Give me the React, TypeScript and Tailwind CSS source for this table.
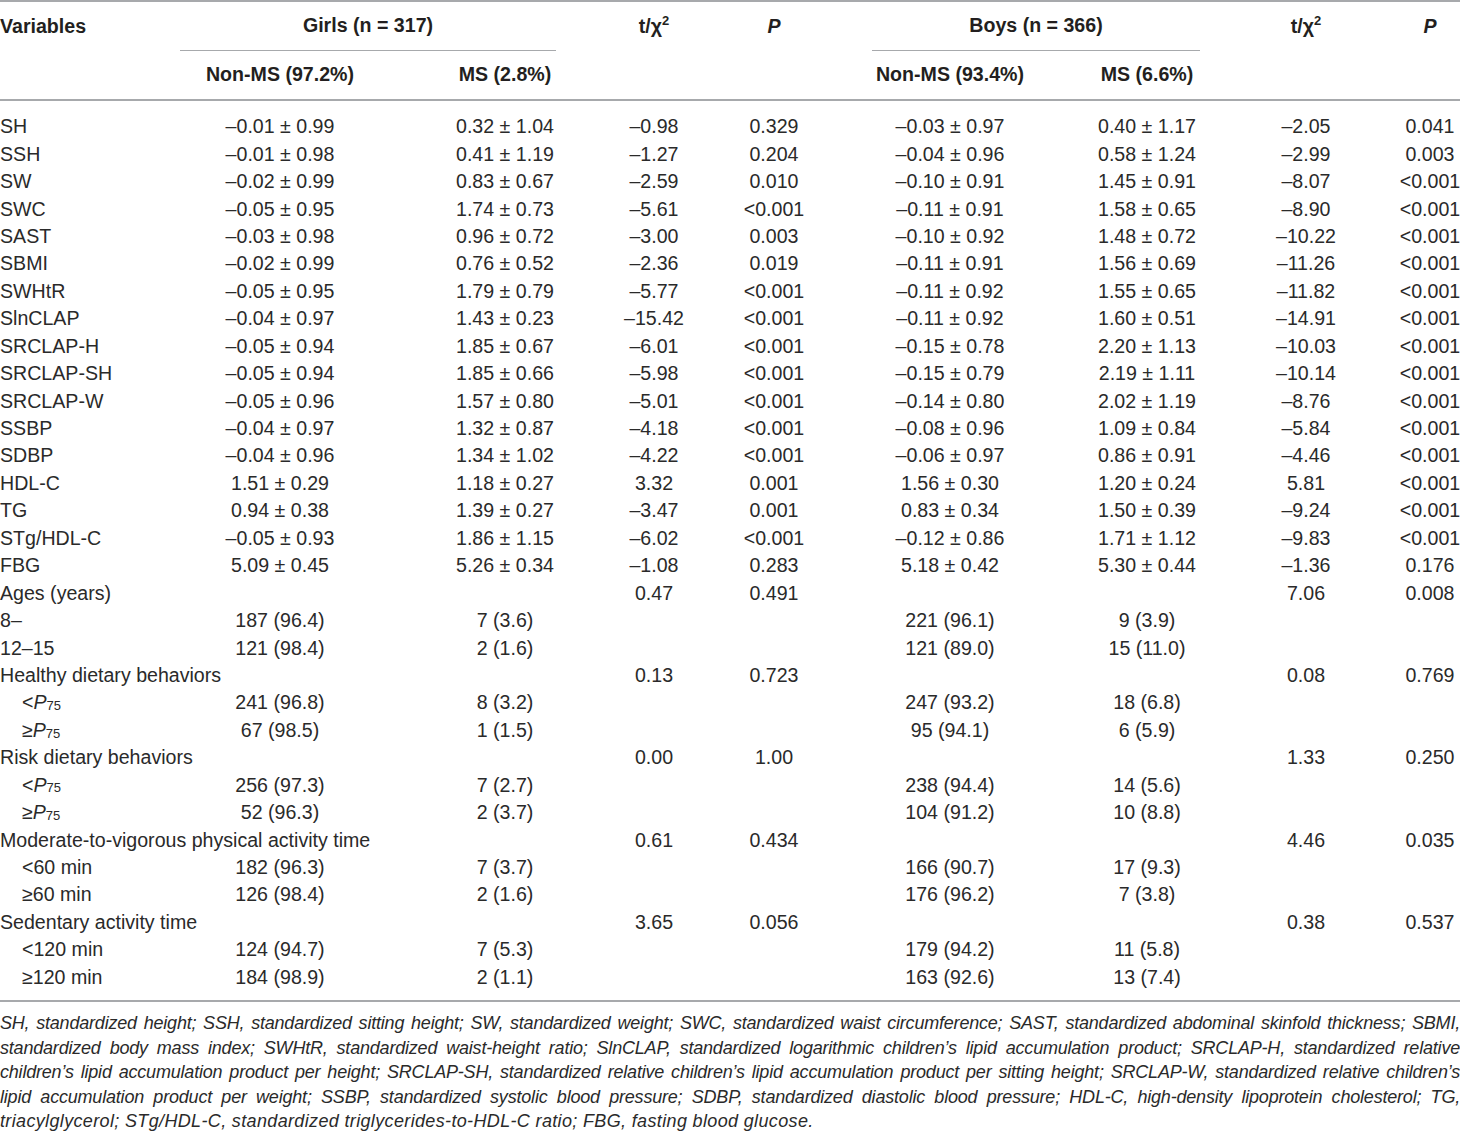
import React from 'react';

type Row = { label: React.ReactNode; indent?: boolean; cells: string[] };

const P75 = ({ sign }: { sign: string }) => (
  <>
    {sign}
    <span className="italic">P</span>
    <sub className="text-[13px]">75</sub>
  </>
);

const continuous: [string, ...string[]][] = [
  ['SH', '–0.01 ± 0.99', '0.32 ± 1.04', '–0.98', '0.329', '–0.03 ± 0.97', '0.40 ± 1.17', '–2.05', '0.041'],
  ['SSH', '–0.01 ± 0.98', '0.41 ± 1.19', '–1.27', '0.204', '–0.04 ± 0.96', '0.58 ± 1.24', '–2.99', '0.003'],
  ['SW', '–0.02 ± 0.99', '0.83 ± 0.67', '–2.59', '0.010', '–0.10 ± 0.91', '1.45 ± 0.91', '–8.07', '<0.001'],
  ['SWC', '–0.05 ± 0.95', '1.74 ± 0.73', '–5.61', '<0.001', '–0.11 ± 0.91', '1.58 ± 0.65', '–8.90', '<0.001'],
  ['SAST', '–0.03 ± 0.98', '0.96 ± 0.72', '–3.00', '0.003', '–0.10 ± 0.92', '1.48 ± 0.72', '–10.22', '<0.001'],
  ['SBMI', '–0.02 ± 0.99', '0.76 ± 0.52', '–2.36', '0.019', '–0.11 ± 0.91', '1.56 ± 0.69', '–11.26', '<0.001'],
  ['SWHtR', '–0.05 ± 0.95', '1.79 ± 0.79', '–5.77', '<0.001', '–0.11 ± 0.92', '1.55 ± 0.65', '–11.82', '<0.001'],
  ['SlnCLAP', '–0.04 ± 0.97', '1.43 ± 0.23', '–15.42', '<0.001', '–0.11 ± 0.92', '1.60 ± 0.51', '–14.91', '<0.001'],
  ['SRCLAP-H', '–0.05 ± 0.94', '1.85 ± 0.67', '–6.01', '<0.001', '–0.15 ± 0.78', '2.20 ± 1.13', '–10.03', '<0.001'],
  ['SRCLAP-SH', '–0.05 ± 0.94', '1.85 ± 0.66', '–5.98', '<0.001', '–0.15 ± 0.79', '2.19 ± 1.11', '–10.14', '<0.001'],
  ['SRCLAP-W', '–0.05 ± 0.96', '1.57 ± 0.80', '–5.01', '<0.001', '–0.14 ± 0.80', '2.02 ± 1.19', '–8.76', '<0.001'],
  ['SSBP', '–0.04 ± 0.97', '1.32 ± 0.87', '–4.18', '<0.001', '–0.08 ± 0.96', '1.09 ± 0.84', '–5.84', '<0.001'],
  ['SDBP', '–0.04 ± 0.96', '1.34 ± 1.02', '–4.22', '<0.001', '–0.06 ± 0.97', '0.86 ± 0.91', '–4.46', '<0.001'],
  ['HDL-C', '1.51 ± 0.29', '1.18 ± 0.27', '3.32', '0.001', '1.56 ± 0.30', '1.20 ± 0.24', '5.81', '<0.001'],
  ['TG', '0.94 ± 0.38', '1.39 ± 0.27', '–3.47', '0.001', '0.83 ± 0.34', '1.50 ± 0.39', '–9.24', '<0.001'],
  ['STg/HDL-C', '–0.05 ± 0.93', '1.86 ± 1.15', '–6.02', '<0.001', '–0.12 ± 0.86', '1.71 ± 1.12', '–9.83', '<0.001'],
  ['FBG', '5.09 ± 0.45', '5.26 ± 0.34', '–1.08', '0.283', '5.18 ± 0.42', '5.30 ± 0.44', '–1.36', '0.176'],
];

const rows: Row[] = [
  ...continuous.map(([label, ...cells]) => ({ label, cells })),
  { label: 'Ages (years)', cells: ['', '', '0.47', '0.491', '', '', '7.06', '0.008'] },
  { label: '8–', cells: ['187 (96.4)', '7 (3.6)', '', '', '221 (96.1)', '9 (3.9)', '', ''] },
  { label: '12–15', cells: ['121 (98.4)', '2 (1.6)', '', '', '121 (89.0)', '15 (11.0)', '', ''] },
  { label: 'Healthy dietary behaviors', cells: ['', '', '0.13', '0.723', '', '', '0.08', '0.769'] },
  { label: <P75 sign="<" />, indent: true, cells: ['241 (96.8)', '8 (3.2)', '', '', '247 (93.2)', '18 (6.8)', '', ''] },
  { label: <P75 sign="≥" />, indent: true, cells: ['67 (98.5)', '1 (1.5)', '', '', '95 (94.1)', '6 (5.9)', '', ''] },
  { label: 'Risk dietary behaviors', cells: ['', '', '0.00', '1.00', '', '', '1.33', '0.250'] },
  { label: <P75 sign="<" />, indent: true, cells: ['256 (97.3)', '7 (2.7)', '', '', '238 (94.4)', '14 (5.6)', '', ''] },
  { label: <P75 sign="≥" />, indent: true, cells: ['52 (96.3)', '2 (3.7)', '', '', '104 (91.2)', '10 (8.8)', '', ''] },
  { label: 'Moderate-to-vigorous physical activity time', cells: ['', '', '0.61', '0.434', '', '', '4.46', '0.035'] },
  { label: '<60 min', indent: true, cells: ['182 (96.3)', '7 (3.7)', '', '', '166 (90.7)', '17 (9.3)', '', ''] },
  { label: '≥60 min', indent: true, cells: ['126 (98.4)', '2 (1.6)', '', '', '176 (96.2)', '7 (3.8)', '', ''] },
  { label: 'Sedentary activity time', cells: ['', '', '3.65', '0.056', '', '', '0.38', '0.537'] },
  { label: '<120 min', indent: true, cells: ['124 (94.7)', '7 (5.3)', '', '', '179 (94.2)', '11 (5.8)', '', ''] },
  { label: '≥120 min', indent: true, cells: ['184 (98.9)', '2 (1.1)', '', '', '163 (92.6)', '13 (7.4)', '', ''] },
];

// shifts each column's centre onto the reference position
const colPad = ['pr-[12px]', 'pl-[38px]', 'pl-[14px]', 'pr-[28px]', 'pr-[10px]', 'pl-[20px]', 'pl-[18px]', 'pl-[32px]'];

const grid = 'grid grid-cols-[180px_212px_188px_134px_148px_186px_178px_142px_92px]';

const Cell = ({ i, children }: { i: number; children?: React.ReactNode }) => (
  <div className={`flex items-center justify-center whitespace-nowrap ${colPad[i]}`}>{children}</div>
);

const TChi = () => (
  <span>
    t/χ<sup className="text-[13px] -top-[0.6em]">2</sup>
  </span>
);

const notes = [
  'SH, standardized height; SSH, standardized sitting height; SW, standardized weight; SWC, standardized waist circumference; SAST, standardized abdominal skinfold thickness; SBMI,',
  'standardized body mass index; SWHtR, standardized waist-height ratio; SlnCLAP, standardized logarithmic children’s lipid accumulation product; SRCLAP-H, standardized relative',
  'children’s lipid accumulation product per height; SRCLAP-SH, standardized relative children’s lipid accumulation product per sitting height; SRCLAP-W, standardized relative children’s',
  'lipid accumulation product per weight; SSBP, standardized systolic blood pressure; SDBP, standardized diastolic blood pressure; HDL-C, high-density lipoprotein cholesterol; TG,',
];

export default function App() {
  return (
    <div className="w-[1460px] h-[1137px] overflow-hidden bg-white text-[#231f20] font-['Liberation_Sans',Arial,sans-serif] text-[19.6px]">
      <div className="border-t-2 border-b-2 border-[#a7a9ac] font-bold">
        <div className={`${grid} h-[49px]`}>
          <div className="flex items-center">Variables</div>
          <div className="col-span-2 mr-[24px] flex items-center justify-center border-b border-[#a7a9ac]">
            Girls (n = 317)
          </div>
          <Cell i={2}><TChi /></Cell>
          <Cell i={3}><span className="italic">P</span></Cell>
          <div className="col-span-2 ml-[10px] mr-[26px] flex items-center justify-center border-b border-[#a7a9ac]">
            Boys (n = 366)
          </div>
          <Cell i={6}><TChi /></Cell>
          <Cell i={7}><span className="italic">P</span></Cell>
        </div>
        <div className={`${grid} h-[48px]`}>
          <div />
          <Cell i={0}>Non-MS (97.2%)</Cell>
          <Cell i={1}>MS (2.8%)</Cell>
          <div />
          <div />
          <Cell i={4}>Non-MS (93.4%)</Cell>
          <Cell i={5}>MS (6.6%)</Cell>
          <div />
          <div />
        </div>
      </div>

      <div className="pt-[12px] pb-[9px] text-[#2a2a2a]">
        {rows.map((r, idx) => (
          <div key={idx} className={`${grid} h-[27.44px] leading-[27px]`}>
            <div className={`flex items-center whitespace-nowrap ${r.indent ? 'pl-[22px]' : ''}`}>{r.label}</div>
            {r.cells.map((c, i) => (
              <Cell key={i} i={i}>{c}</Cell>
            ))}
          </div>
        ))}
      </div>

      <div className="border-t-2 border-[#a7a9ac] pt-[9px] italic text-[18px] tracking-[-0.2px] leading-[24.5px] text-[#2a2a2a]">
        {notes.map((n, i) => (
          <p key={i} className="text-justify [text-align-last:justify]">{n}</p>
        ))}
        <p className="tracking-[0.35px]">triacylglycerol; STg/HDL-C, standardized triglycerides-to-HDL-C ratio; FBG, fasting blood glucose.</p>
      </div>
    </div>
  );
}
